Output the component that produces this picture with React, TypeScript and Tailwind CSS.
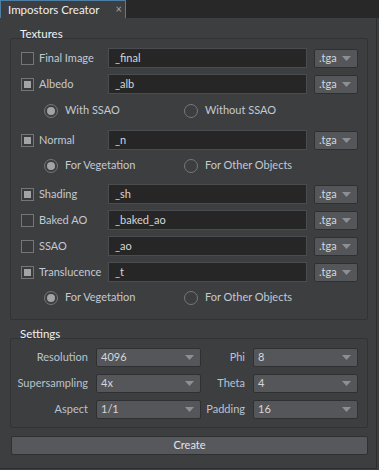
import React from "react";

const font = { fontFamily: 'Lato, "Liberation Sans", Arial, sans-serif' };

function Check({ on }: { on?: boolean }) {
  return (
    <div className="w-[13px] h-[13px] border border-[#75767a] bg-[#3a3b3d] flex items-center justify-center shrink-0">
      {on && <div className="w-[7px] h-[7px] bg-[#a3a4a7]" />}
    </div>
  );
}

function Radio({ on }: { on?: boolean }) {
  return (
    <div className="w-[14px] h-[14px] rounded-full border border-[#76777b] flex items-center justify-center shrink-0">
      {on && <div className="w-[8px] h-[8px] rounded-full bg-[#a3a4a7]" />}
    </div>
  );
}

function Arrow() {
  return (
    <svg width="9" height="5" viewBox="0 0 9 5" className="shrink-0">
      <path d="M0 0 H9 L4.5 5 Z" fill="#8e8f93" />
    </svg>
  );
}

function Combo({ value, w }: { value: string; w: string }) {
  return (
    <div className={`${w} h-[19px] bg-[#55565a] border border-[#2f3032] rounded-[2px] flex items-center justify-between pl-[4px] pr-[6px] text-[#d4d6da]`}>
      <span>{value}</span>
      <Arrow />
    </div>
  );
}

function TexRow({ label, value, on, mt }: { label: string; value: string; on?: boolean; mt?: boolean }) {
  return (
    <div className={`flex items-center h-[20px] ${mt ? "mt-[6px]" : ""}`}>
      <div className="w-[87px] flex items-center gap-[5px]">
        <Check on={on} />
        <span className="text-[#c3c9d2]">{label}</span>
      </div>
      <div className="w-[199px] h-[20px] bg-[#262626] border border-[#4b4c4f] pl-[6px] flex items-center text-[#d6d6d6]">
        {value}
      </div>
      <div className="ml-[7px]">
        <Combo value=".tga" w="w-[44px]" />
      </div>
    </div>
  );
}

function RadioRow({ a, b, h }: { a: string; b: string; h: string }) {
  return (
    <div className={`flex items-center ${h} pb-[3px]`}>
      <div className="w-[163px] pl-[23px] flex items-center gap-[7px]">
        <Radio on />
        <span className="text-[#c3c9d2]">{a}</span>
      </div>
      <div className="flex items-center gap-[7px]">
        <Radio />
        <span className="text-[#c3c9d2]">{b}</span>
      </div>
    </div>
  );
}

function SetRow({ l1, v1, l2, v2, mt }: { l1: string; v1: string; l2: string; v2: string; mt?: boolean }) {
  return (
    <div className={`flex items-center h-[19px] ${mt ? "mt-[7px]" : ""}`}>
      <span className="w-[77px] text-right text-[#b9c3cf]">{l1}</span>
      <div className="ml-[8px]">
        <Combo value={v1} w="w-[105px]" />
      </div>
      <span className="w-[44px] text-right text-[#b9c3cf]">{l2}</span>
      <div className="ml-[8px]">
        <Combo value={v2} w="w-[105px]" />
      </div>
    </div>
  );
}

export default function App() {
  return (
    <div className="w-[379px] h-[470px] bg-[#3d3e40] text-[11px] overflow-hidden" style={font}>
      <div className="flex h-[18px] bg-[#282828]">
        <div className="w-[126px] h-[18px] bg-[#3d3e40] border-t border-l border-r border-[#4d7ea6] flex items-center justify-between pl-[7px] pr-[3px]">
          <span className="text-[#f0f0f0] text-[11.5px]">Impostors Creator</span>
          <span className="text-[#a5a6a9] text-[11px]">×</span>
        </div>
      </div>
      <div className="w-[377px] h-[451px] border-r border-b border-[#2c2d2f] pl-[10px]">
        <div className="h-[20px] pl-[10px] pt-[9px] leading-[14px] text-[#eef0f3] text-[11.5px]">Textures</div>
        <div className="w-[358px] h-[282px] border border-[#323335] rounded-[2px] pl-[10px] pt-[9px]">
          <TexRow label="Final Image" value="_final" />
          <TexRow label="Albedo" value="_alb" on mt />
          <RadioRow a="With SSAO" b="Without SSAO" h="h-[36px]" />
          <TexRow label="Normal" value="_n" on />
          <RadioRow a="For Vegetation" b="For Other Objects" h="h-[34px]" />
          <TexRow label="Shading" value="_sh" on />
          <TexRow label="Baked AO" value="_baked_ao" mt />
          <TexRow label="SSAO" value="_ao" mt />
          <TexRow label="Translucence" value="_t" on mt />
          <RadioRow a="For Vegetation" b="For Other Objects" h="h-[34px]" />
        </div>
        <div className="h-[18px] pl-[10px] pt-[7px] leading-[14px] text-[#eef0f3] text-[11.5px]">Settings</div>
        <div className="w-[358px] h-[90px] border border-[#323335] rounded-[2px] pt-[9px]">
          <SetRow l1="Resolution" v1="4096" l2="Phi" v2="8" />
          <SetRow l1="Supersampling" v1="4x" l2="Theta" v2="4" mt />
          <SetRow l1="Aspect" v1="1/1" l2="Padding" v2="16" mt />
        </div>
        <div className="ml-[1px] mt-[8px] w-[357px] h-[19px] bg-[#57585b] border border-[#2f3032] rounded-[2px] flex items-center justify-center text-[#e4e6ea]">
          Create
        </div>
      </div>
    </div>
  );
}
